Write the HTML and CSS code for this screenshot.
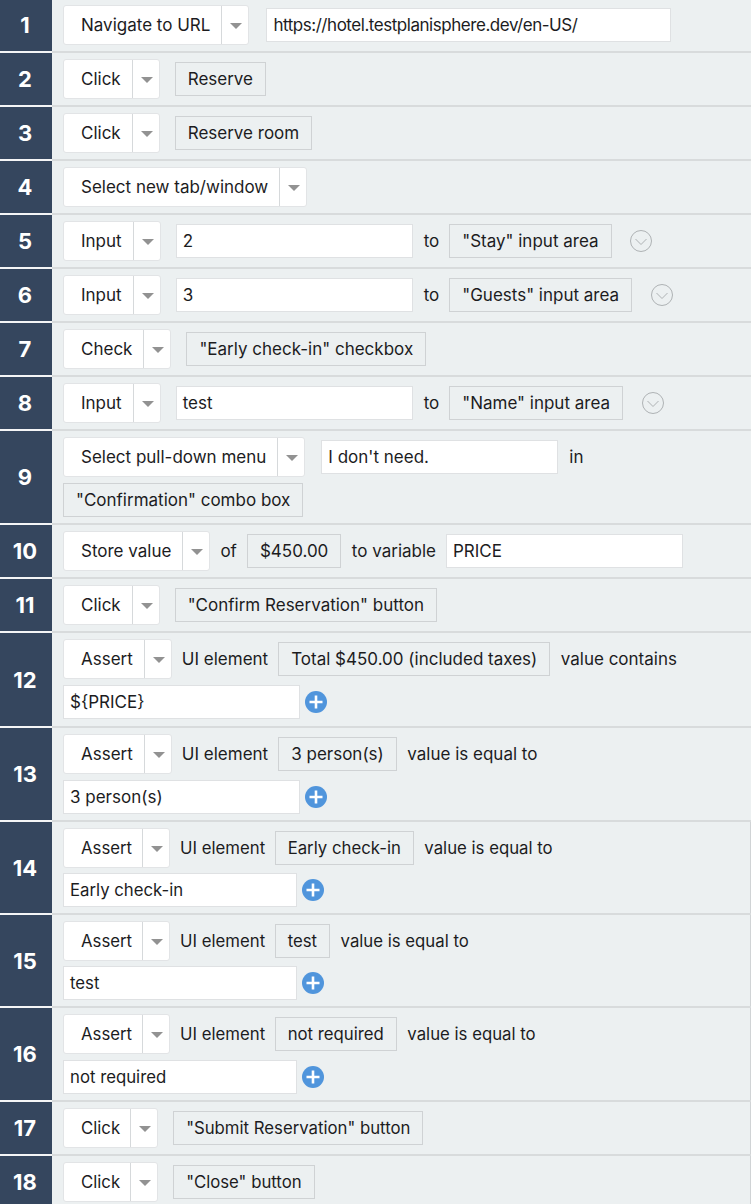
FILE: index.html
```
<!DOCTYPE html>
<html lang="en">
<head>
<meta charset="utf-8">
<title>Test steps</title>
<link rel="stylesheet" href="styles.css">
</head>
<body>
<svg class="defs" width="0" height="0" aria-hidden="true">
  <symbol id="plus" viewBox="0 0 22 22"><circle cx="11" cy="11" r="11" fill="#5095dc"/><path d="M11 4.500v13M4.500 11h13" stroke="#fff" stroke-width="2.600"/></symbol>
  <symbol id="chev" viewBox="0 0 22 22"><circle cx="11" cy="11" r="10.500" fill="none" stroke="#aeb2b4"/><path d="M5.500 9l5.500 5.500L16.500 9" fill="none" stroke="#aeb2b4"/></symbol>
</svg>
<main class="list">
  <section class="row"><div class="num">1</div><div class="body">
    <div class="sel"><span class="sel-text">Navigate to URL</span><span class="sel-arrow"></span></div>
    <div class="field url">https://hotel.testplanisphere.dev/en-US/</div>
  </div></section>
  <section class="row"><div class="num">2</div><div class="body">
    <div class="sel"><span class="sel-text">Click</span><span class="sel-arrow"></span></div>
    <div class="tag">Reserve</div>
  </div></section>
  <section class="row"><div class="num">3</div><div class="body">
    <div class="sel"><span class="sel-text">Click</span><span class="sel-arrow"></span></div>
    <div class="tag">Reserve room</div>
  </div></section>
  <section class="row"><div class="num">4</div><div class="body">
    <div class="sel"><span class="sel-text">Select new tab/window</span><span class="sel-arrow"></span></div>
  </div></section>
  <section class="row"><div class="num">5</div><div class="body">
    <div class="sel"><span class="sel-text">Input</span><span class="sel-arrow"></span></div>
    <div class="field">2</div><span class="lbl">to</span><div class="tag">"Stay" input area</div>
    <svg class="chev"><use href="#chev"/></svg>
  </div></section>
  <section class="row"><div class="num">6</div><div class="body">
    <div class="sel"><span class="sel-text">Input</span><span class="sel-arrow"></span></div>
    <div class="field">3</div><span class="lbl">to</span><div class="tag">"Guests" input area</div>
    <svg class="chev"><use href="#chev"/></svg>
  </div></section>
  <section class="row"><div class="num">7</div><div class="body">
    <div class="sel"><span class="sel-text">Check</span><span class="sel-arrow"></span></div>
    <div class="tag">"Early check-in" checkbox</div>
  </div></section>
  <section class="row"><div class="num">8</div><div class="body">
    <div class="sel"><span class="sel-text">Input</span><span class="sel-arrow"></span></div>
    <div class="field">test</div><span class="lbl">to</span><div class="tag">"Name" input area</div>
    <svg class="chev"><use href="#chev"/></svg>
  </div></section>
  <section class="row"><div class="num">9</div><div class="body">
    <div class="sel"><span class="sel-text">Select pull-down menu</span><span class="sel-arrow"></span></div>
    <div class="field menu">I don't need.</div><span class="lbl">in</span>
    <div class="tag">"Confirmation" combo box</div>
  </div></section>
  <section class="row"><div class="num">10</div><div class="body">
    <div class="sel"><span class="sel-text">Store value</span><span class="sel-arrow"></span></div>
    <span class="lbl">of</span><div class="tag">$450.00</div><span class="lbl">to variable</span>
    <div class="field">PRICE</div>
  </div></section>
  <section class="row"><div class="num">11</div><div class="body">
    <div class="sel"><span class="sel-text">Click</span><span class="sel-arrow"></span></div>
    <div class="tag">"Confirm Reservation" button</div>
  </div></section>
  <section class="row wide"><div class="num">12</div><div class="body">
    <div class="sel"><span class="sel-text">Assert</span><span class="sel-arrow"></span></div>
    <span class="lbl">UI element</span><div class="tag">Total $450.00 (included taxes)</div><span class="lbl">value contains</span>
    <div class="expect"><div class="field">${PRICE}</div><svg class="plus"><use href="#plus"/></svg></div>
  </div></section>
  <section class="row"><div class="num">13</div><div class="body">
    <div class="sel"><span class="sel-text">Assert</span><span class="sel-arrow"></span></div>
    <span class="lbl">UI element</span><div class="tag">3 person(s)</div><span class="lbl">value is equal to</span>
    <div class="expect"><div class="field">3 person(s)</div><svg class="plus"><use href="#plus"/></svg></div>
  </div></section>
  <section class="row alt tight"><div class="num">14</div><div class="body">
    <div class="sel"><span class="sel-text">Assert</span><span class="sel-arrow"></span></div>
    <span class="lbl">UI element</span><div class="tag">Early check-in</div><span class="lbl">value is equal to</span>
    <div class="expect"><div class="field">Early check-in</div><svg class="plus"><use href="#plus"/></svg></div>
  </div></section>
  <section class="row alt tight"><div class="num">15</div><div class="body">
    <div class="sel"><span class="sel-text">Assert</span><span class="sel-arrow"></span></div>
    <span class="lbl">UI element</span><div class="tag">test</div><span class="lbl">value is equal to</span>
    <div class="expect"><div class="field">test</div><svg class="plus"><use href="#plus"/></svg></div>
  </div></section>
  <section class="row alt"><div class="num">16</div><div class="body">
    <div class="sel"><span class="sel-text">Assert</span><span class="sel-arrow"></span></div>
    <span class="lbl">UI element</span><div class="tag">not required</div><span class="lbl">value is equal to</span>
    <div class="expect"><div class="field">not required</div><svg class="plus"><use href="#plus"/></svg></div>
  </div></section>
  <section class="row alt"><div class="num">17</div><div class="body">
    <div class="sel"><span class="sel-text">Click</span><span class="sel-arrow"></span></div>
    <div class="tag">"Submit Reservation" button</div>
  </div></section>
  <section class="row alt"><div class="num">18</div><div class="body">
    <div class="sel"><span class="sel-text">Click</span><span class="sel-arrow"></span></div>
    <div class="tag">"Close" button</div>
  </div></section>
</main>
</body>
</html>
```
FILE: styles.css
```
* { box-sizing: border-box; }
html, body { margin: 0; padding: 0; background: #ecf0f1; }
body { height: 1204px; overflow: hidden; font-family: Inter, "Liberation Sans", sans-serif; font-size: 17px; color: #1c1c1e; }
.defs { position: absolute; }
.list { margin-top: -1px; }
.row { display: flex; align-items: stretch; border-bottom: 2px solid #d8dbdc; }
.num { flex: 0 0 52px; margin-right: 2px; margin-bottom: -2px; padding-right: 2px; background: #35465e; color: #fff; font-weight: 700; font-size: 22px; display: flex; align-items: center; justify-content: center; border-bottom: 2px solid #f4f5f6; }
.body { flex: 1; display: flex; flex-wrap: wrap; align-items: center; padding: 6px 0 6px 9px; min-height: 52px; row-gap: 6px; }
.wide .body { padding-bottom: 7px; }
.tight .body { row-gap: 5px; }
.sel { display: flex; height: 40px; background: #fff; border: 1px solid #e2e4e6; border-radius: 3px; margin-right: 10px; }
.sel-text { padding: 0 11px 0 17px; line-height: 38px; border-right: 1px solid #d6d9db; white-space: nowrap; }
.sel-arrow { width: 26px; position: relative; }
.sel-arrow::after { content: ""; position: absolute; left: 8px; top: 17px; border: 6px solid transparent; border-top: 6px solid #929292; border-bottom: 0; }
.tag { height: 34px; line-height: 32px; padding: 0 12px; background: #ecf0f1; border: 1px solid #cfd2d4; margin-right: 10.500px; white-space: nowrap; }
.sel + .tag { margin-left: 5px; }
.field { width: 236.500px; height: 34px; line-height: 32px; padding: 0 6px; background: #fff; border: 1px solid #dfe1e3; margin-right: 11px; white-space: nowrap; }
.sel + .field { width: 237px; margin-left: 5px; }
.field.menu { margin-left: 6px; }
.field.url { width: 405px; margin-left: 7px; letter-spacing: -0.46px; }
.lbl { margin-right: 10px; white-space: nowrap; }
.chev { width: 22px; height: 22px; margin-left: 8px; }
.expect { flex: 0 0 100%; display: flex; align-items: center; }
.plus { width: 22px; height: 22px; margin-left: -5.500px; }
.alt { font-size: 16.750px; }
.alt .body { border-right: 1px solid #d0d3d5; }
.alt .sel-text { padding-right: 10px; }
.alt .lbl { margin-right: 9.500px; }
.alt .field { width: 234px; }
.alt .plus { margin-left: -6px; }
```
